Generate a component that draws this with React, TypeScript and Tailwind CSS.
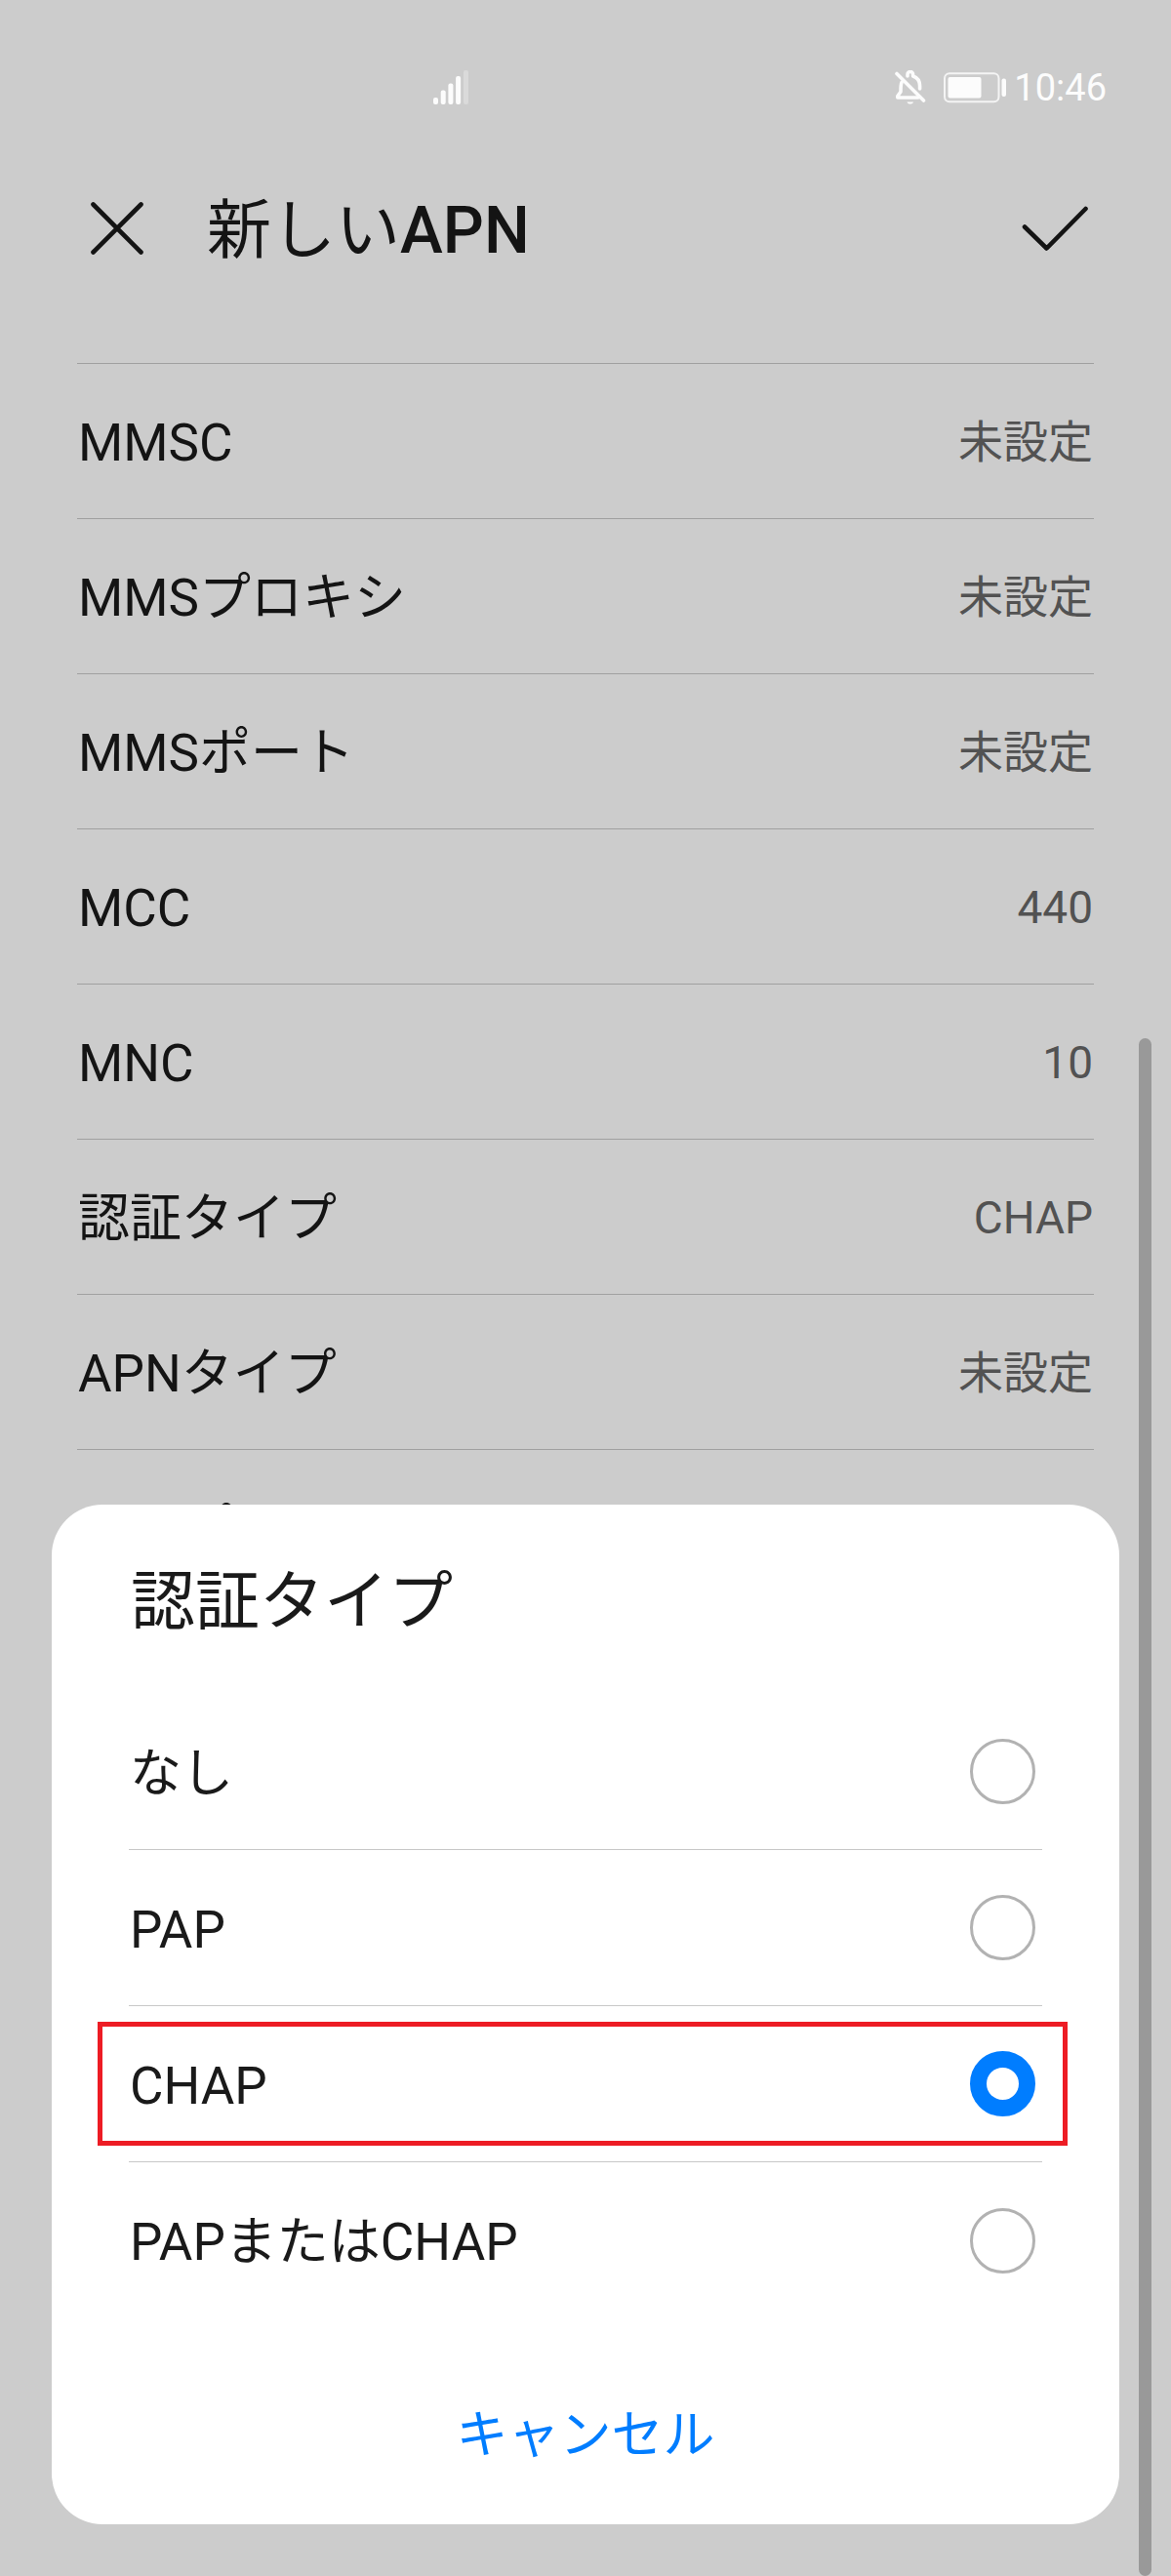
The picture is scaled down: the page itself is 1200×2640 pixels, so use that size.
import { useState } from "react";

const settings = [
  { label: "MMSC", value: "未設定" },
  { label: "MMSプロキシ", value: "未設定" },
  { label: "MMSポート", value: "未設定" },
  { label: "MCC", value: "440" },
  { label: "MNC", value: "10" },
  { label: "認証タイプ", value: "CHAP" },
  { label: "APNタイプ", value: "未設定" },
  { label: "APNプロトコル", value: "" },
];

const authTypes = ["なし", "PAP", "CHAP", "PAPまたはCHAP"];
const highlighted = "CHAP";

function SignalIcon() {
  return (
    <svg width="37" height="36" viewBox="0 0 37 36" fill="#fcfcfc" aria-hidden="true">
      <rect x="0" y="28" width="5" height="7" rx="2" />
      <rect x="7.7" y="20.5" width="5" height="14.5" rx="2" />
      <rect x="15.4" y="13.5" width="5" height="21.5" rx="2" />
      <rect x="23.1" y="6" width="5" height="29" rx="2" />
      <rect x="31" y="0" width="5" height="35" rx="2" fill="#dadada" />
    </svg>
  );
}

function MutedBellIcon() {
  return (
    <svg width="32" height="36" viewBox="0 0 32 36" fill="none" stroke="#fcfcfc" strokeWidth="3.6" strokeLinecap="round" strokeLinejoin="round" aria-hidden="true">
      <path d="M2 3.5 29.5 31" />
      <path d="M7 12.5C6 14.5 6 17 6 22L2.8 26.5V28H24" />
      <path d="M13 6V4.3a2.8 2.8 0 0 1 5.6 0V6C23 7.5 25.6 11 25.6 16v3" />
      <path d="M12.5 32.4h6.5c-.6 2.8-5.9 2.8-6.5 0Z" fill="#fcfcfc" stroke="none" />
    </svg>
  );
}

function BatteryIcon() {
  return (
    <svg width="64" height="32" viewBox="0 0 64 32" aria-hidden="true">
      <rect x="1" y="1.2" width="55.5" height="29" rx="5" fill="none" stroke="#f4f4f4" strokeWidth="2" />
      <rect x="4.5" y="5" width="34" height="21.5" rx="2" fill="#fcfcfc" />
      <rect x="59.5" y="6.5" width="4.5" height="18.5" rx="2" fill="#fcfcfc" />
    </svg>
  );
}

export default function App() {
  const [selected, setSelected] = useState("CHAP");

  return (
    <div className="relative min-h-screen overflow-hidden bg-[#cccccc] font-[Roboto,'Noto_Sans_CJK_JP',sans-serif] text-[#141414]">
      <div className="flex items-center justify-between pt-[60px] pr-[66px] pl-[37%]">
        <SignalIcon />
        <div className="flex items-center">
          <MutedBellIcon />
          <div className="ml-[18px]">
            <BatteryIcon />
          </div>
          <span className="ml-2 text-[38px] leading-[60px] text-[#fcfcfc]">10:46</span>
        </div>
      </div>

      <header className="flex h-[252px] items-start px-[80px] pt-[68px]">
        <button type="button" aria-label="閉じる" className="flex h-[92px] w-[80px] items-center justify-center">
          <svg width="54" height="54" viewBox="0 0 54 54" fill="none" stroke="#141414" strokeWidth="4.6" strokeLinecap="round">
            <path d="M2.5 2.5 51.5 51.5M51.5 2.5 2.5 51.5" />
          </svg>
        </button>
        <h1 className="ml-[52px] flex-1 text-[66px] leading-[98px]">
          新しい<span className="font-medium">APN</span>
        </h1>
        <button type="button" aria-label="保存" className="flex h-[92px] w-[78px] items-center justify-center">
          <svg width="68" height="46" viewBox="0 0 68 46" fill="none" stroke="#141414" strokeWidth="4.6" strokeLinecap="round" strokeLinejoin="round">
            <path d="M3 21.5 25.5 43.5 65.500 3" />
          </svg>
        </button>
      </header>

      <ul className="mx-[79px] border-t border-[#a0a0a0]">
        {settings.map((item) => (
          <li key={item.label} className="flex h-[159px] items-center justify-between border-b border-[#a0a0a0] px-[1px] pt-[2px]">
            <span className="pt-[2px] text-[53px] leading-[72px]">{item.label}</span>
            <span className="text-[46px] leading-[72px] text-[#525252]">{item.value}</span>
          </li>
        ))}
      </ul>

      <div className="absolute right-[20px] bottom-0 h-[1576px] w-[13px] rounded-full bg-[#999999]" />

      <section role="dialog" aria-labelledby="auth-title" className="absolute inset-x-[53px] bottom-[53px] rounded-[52px] bg-white px-[79px] pt-[52px] pb-[42px] text-[#1a1a1a]">
        <h2 id="auth-title" className="pl-[2px] text-[66px] leading-[96px]">認証タイプ</h2>
        <div role="radiogroup" aria-labelledby="auth-title" className="mt-[46px] divide-y divide-[#c8c8c8]">
          {authTypes.map((type) => (
            <label key={type} className="relative flex h-[160px] items-center justify-between pr-[7px] pl-[1px]">
              <span className="pt-[4px] text-[53px] leading-[72px]">{type}</span>
              <input
                type="radio"
                name="auth-type"
                value={type}
                checked={selected === type}
                onChange={() => setSelected(type)}
                className="size-[67px] appearance-none rounded-full border-[3px] border-[#b2b2b2] bg-white checked:border-[17px] checked:border-[#007dff]"
              />
              {type === highlighted && (
                <span className="pointer-events-none absolute top-4 -right-[26px] bottom-4 -left-8 border-[5px] border-[#ed1c24]" />
              )}
            </label>
          ))}
        </div>
        <button type="button" className="mt-[71px] block w-full text-[53px] leading-[98px] text-[#007dff]">
          キャンセル
        </button>
      </section>
    </div>
  );
}
